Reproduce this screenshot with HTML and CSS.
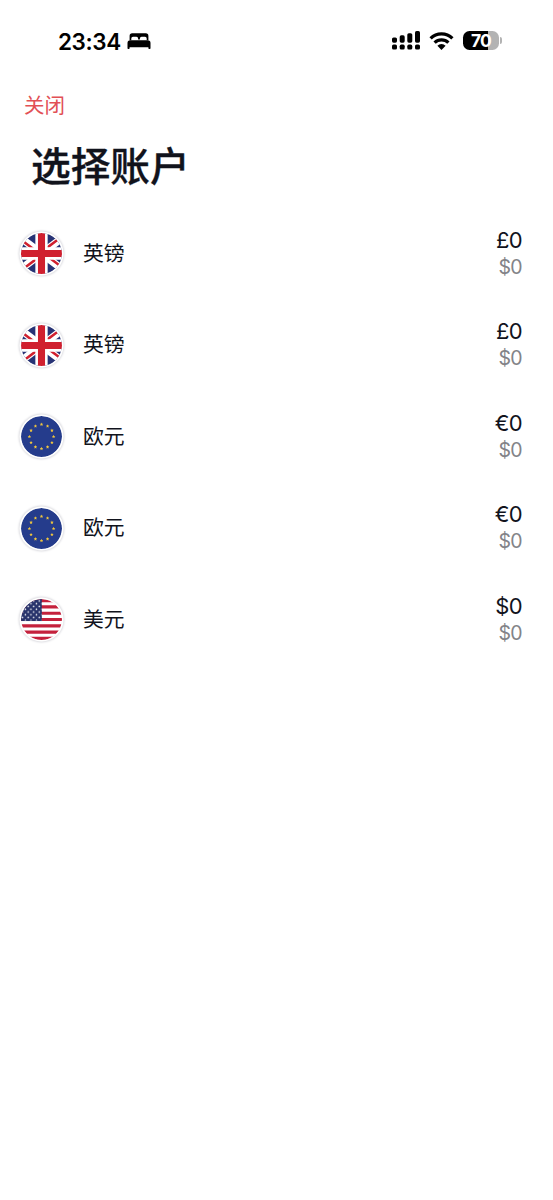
FILE: index.html
```html
<!DOCTYPE html>
<html lang="zh-CN">
<head>
<meta charset="utf-8">
<title>选择账户</title>
<link rel="stylesheet" href="styles.css">
</head>
<body>
<svg class="defs" width="0" height="0" aria-hidden="true">
  <defs>
    <clipPath id="disc"><circle cx="20" cy="20" r="20"/></clipPath>
    <g id="gb" clip-path="url(#disc)">
      <rect width="40" height="40" fill="#273375"/>
      <path d="M-4 2 44 38M44 2-4 38" stroke="#fff" stroke-width="7.4"/>
      <path d="M-4 3.6 20 21.6M20 18.4 44 .4M20 18.4 44 36.4M-4 39.6 20 21.6" stroke="#d0202f" stroke-width="2.5"/>
      <path d="M20 0V40M0 20H40" stroke="#fff" stroke-width="12"/>
      <path d="M20 0V40M0 20H40" stroke="#d0202f" stroke-width="6.9"/>
    </g>
    <path id="star" fill="#f0c63e" d="M0-1.8.5-.6 1.7-.6.8.3 1.1 1.5 0 .9-1.1 1.5-.8.3-1.7-.6-.5-.6Z"/>
    <g id="eu">
      <circle cx="20" cy="20" r="20" fill="#253c8c"/>
      <use href="#star" x="20" y="8.2"/><use href="#star" x="25.9" y="9.8"/><use href="#star" x="30.2" y="14.1"/>
      <use href="#star" x="31.8" y="20"/><use href="#star" x="30.2" y="25.9"/><use href="#star" x="25.9" y="30.2"/>
      <use href="#star" x="20" y="31.8"/><use href="#star" x="14.1" y="30.2"/><use href="#star" x="9.8" y="25.9"/>
      <use href="#star" x="8.2" y="20"/><use href="#star" x="9.8" y="14.1"/><use href="#star" x="14.1" y="9.8"/>
    </g>
    <pattern id="stars" width="5.4" height="5.4" patternUnits="userSpaceOnUse" patternTransform="translate(.3 .6)">
      <circle cx="1.3" cy="1.3" r=".75" fill="#fff"/><circle cx="4" cy="4" r=".75" fill="#fff"/>
    </pattern>
    <g id="us" clip-path="url(#disc)">
      <rect width="40" height="40" fill="#fff"/>
      <path d="M0 1.5H40M0 7.7H40M0 13.9H40M0 20H40M0 26.2H40M0 32.4H40M0 38.5H40" stroke="#c4213c" stroke-width="3.1"/>
      <rect width="20.3" height="21.5" fill="#28336b"/>
      <rect width="20" height="21" fill="url(#stars)"/>
    </g>
  </defs>
</svg>
<header class="status">
  <div class="clock">
    <span>23:34</span>
    <svg width="24" height="16" viewBox="0 0 24 16">
      <path d="M2.6 7.3V3Q2.6.3 5.2.3H18.8Q21.4.3 21.4 3V7.3H19.7V5.4Q19.7 3.7 18 3.7H14.6Q12.9 3.7 12.9 5.4V6.4H11.1V5.4Q11.1 3.7 9.4 3.7H6Q4.3 3.7 4.3 5.4V7.3Z"/>
      <path d="M.5 15.2V10Q.5 7.2 3.3 7.2H20.7Q23.5 7.2 23.5 10V15.2Q23.5 16 22.7 16H22.1Q21.4 16 21.4 15.2V14.2H2.6V15.2Q2.6 16 1.9 16H1.3Q.5 16 .5 15.2Z"/>
    </svg>
  </div>
  <div class="indicators">
    <svg width="28" height="19" viewBox="0 0 28 19">
      <rect x="0" y="6.5" width="5" height="5.2" rx="1.6"/><rect x="7.7" y="4.3" width="5" height="7.4" rx="1.6"/>
      <rect x="15.3" y="2.2" width="5" height="9.5" rx="1.6"/><rect x="23" y="0" width="5" height="11.7" rx="1.6"/>
      <rect x="0" y="13.6" width="5" height="5" rx="1.6"/><rect x="7.7" y="13.6" width="5" height="5" rx="1.6"/>
      <rect x="15.3" y="13.6" width="5" height="5" rx="1.6"/><rect x="23" y="13.6" width="5" height="5" rx="1.6"/>
    </svg>
    <svg class="wifi" width="25" height="18" viewBox="0 0 25 18">
      <path d="M1.6 6.4A15.6 15.6 0 0 1 23.4 6.4M5.6 10.6A10 10 0 0 1 19.4 10.6" fill="none" stroke="#000" stroke-width="3.3"/>
      <path d="M12.5 17.9 8.4 13.8A5.8 5.8 0 0 1 16.6 13.8Z"/>
    </svg>
    <div class="battery"><span>70</span></div>
    <i class="cap"></i>
  </div>
</header>
<main>
  <a class="close">关闭</a>
  <h1>选择账户</h1>
  <ul class="accounts">
    <li><svg class="flag" viewBox="0 0 40 40"><use href="#gb"/></svg><span class="name">英镑</span><div class="sums"><b>£0</b><small>$0</small></div></li>
    <li><svg class="flag" viewBox="0 0 40 40"><use href="#gb"/></svg><span class="name">英镑</span><div class="sums"><b>£0</b><small>$0</small></div></li>
    <li><svg class="flag" viewBox="0 0 40 40"><use href="#eu"/></svg><span class="name">欧元</span><div class="sums"><b>€0</b><small>$0</small></div></li>
    <li><svg class="flag" viewBox="0 0 40 40"><use href="#eu"/></svg><span class="name">欧元</span><div class="sums"><b>€0</b><small>$0</small></div></li>
    <li><svg class="flag" viewBox="0 0 40 40"><use href="#us"/></svg><span class="name">美元</span><div class="sums"><b>$0</b><small>$0</small></div></li>
  </ul>
</main>
</body>
</html>
```
FILE: styles.css
```css
* { box-sizing: border-box; }
body {
  margin: 0;
  min-height: 1200px;
  background: #fff;
  color: #11131c;
  font-family: Inter, "Noto Sans CJK SC", sans-serif;
}
.defs { display: block; }
.status {
  display: flex;
  justify-content: space-between;
  align-items: center;
  height: 82px;
  padding: 0 51px 0 58px;
  color: #000;
}
.clock { display: flex; align-items: center; gap: 6px; font-size: 22.5px; font-weight: 600; letter-spacing: -.4px; }
.indicators { display: flex; align-items: center; margin-top: -1px; }
.wifi { margin: 0 9px; }
.battery {
  width: 36px;
  height: 19px;
  border-radius: 6.5px;
  background: linear-gradient(90deg, #000 70%, #b3b3b3 70%);
  color: #fff;
  font-size: 17.5px;
  font-weight: 700;
  letter-spacing: -.8px;
  line-height: 19px;
  text-align: center;
}
.cap { width: 2px; height: 7px; margin-left: 1px; border-radius: 0 2px 2px 0; background: #b3b3b3; }
main { padding: 9px 31px 0 21px; }
.close { display: block; margin-left: 3px; color: #e25055; font-size: 20.5px; line-height: 30px; }
h1 { margin: 16px 0 0 10px; font-size: 39.7px; font-weight: 500; line-height: 60px; -webkit-text-stroke: .3px currentColor; }
.accounts { margin: 11px 0 0; padding: 0; list-style: none; }
.accounts li { display: flex; align-items: center; height: 91.5px; }
.flag {
  display: block;
  width: 41px;
  height: 41px;
  border-radius: 50%;
  box-shadow: 0 0 0 1.5px #fff, 0 0 2px 2.5px #dfdfe3;
}
.name { margin-left: 21px; font-size: 20.8px; line-height: 30px; }
.sums { display: flex; flex-direction: column; align-items: flex-end; margin-left: auto; }
.sums b { font-size: 22px; font-weight: 400; line-height: 27px; letter-spacing: -.6px; }
.sums small { color: #838388; font-size: 19.5px; line-height: 27px; letter-spacing: -.6px; }
```
